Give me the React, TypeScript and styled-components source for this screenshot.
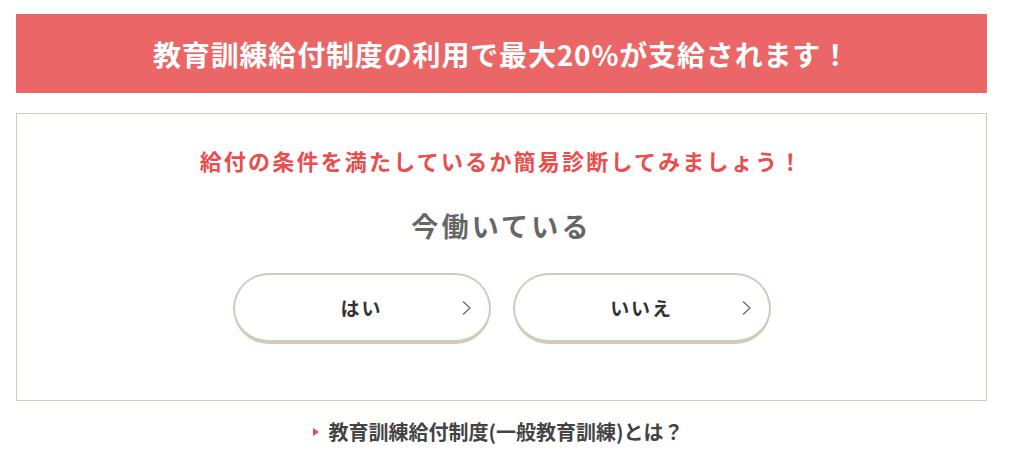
import styled, { createGlobalStyle } from 'styled-components';

const GlobalStyle = createGlobalStyle`
  body {
    margin: 0;
    background: #fff;
    font-family: "Noto Sans CJK JP", "Noto Sans", sans-serif;
  }
`;

const Page = styled.div`
  padding: 14px 30px 0 16px;
  display: flex;
  flex-direction: column;
`;

const Banner = styled.h2`
  margin: 0;
  height: 79px;
  background: #eb6767;
  color: #fff;
  font-size: 28px;
  font-weight: 700;
  letter-spacing: 0.03em;
  display: flex;
  align-items: center;
  justify-content: center;
`;

const Card = styled.section`
  margin-top: 20px;
  height: 288px;
  border: 1px solid #d3cab9;
  display: flex;
  flex-direction: column;
  align-items: center;
  box-sizing: border-box;
  padding-top: 30px;
`;

const Lead = styled.p`
  margin: 0;
  color: #e84e4e;
  font-size: 22px;
  font-weight: 700;
  letter-spacing: 0.1em;
  line-height: 32px;
`;

const Question = styled.h3`
  margin: 30px 0 0;
  color: #666;
  font-size: 27px;
  font-weight: 700;
  letter-spacing: 0.12em;
  line-height: 40px;
`;

const Answers = styled.div`
  margin-top: 27px;
  display: flex;
  gap: 22px;
`;

const AnswerButton = styled.button`
  position: relative;
  width: 258px;
  height: 71px;
  box-sizing: border-box;
  background: #fff;
  border: 2px solid #d3cab9;
  border-bottom-width: 4px;
  border-radius: 36px;
  color: #333;
  font-family: inherit;
  font-size: 19px;
  font-weight: 700;
  letter-spacing: 0.1em;
  display: flex;
  align-items: center;
  justify-content: center;
  cursor: pointer;
`;

const Chevron = styled.svg`
  position: absolute;
  right: 18px;
  top: 50%;
  transform: translateY(-50%);
`;

const MoreLink = styled.a`
  margin-top: 17px;
  align-self: center;
  display: flex;
  align-items: center;
  gap: 9px;
  color: #444;
  font-size: 20px;
  font-weight: 700;
  text-decoration: none;
  line-height: 28px;
  padding-right: 6px;
`;

const Marker = styled.span`
  width: 0;
  height: 0;
  border-top: 4px solid transparent;
  border-bottom: 4px solid transparent;
  border-left: 6px solid #e84e4e;
`;

function Arrow() {
  return (
    <Chevron width="9" height="15" viewBox="0 0 9 15">
      <polyline points="1,1 8,7.5 1,14" fill="none" stroke="#666" strokeWidth="1.2" />
    </Chevron>
  );
}

export default function App() {
  return (
    <>
      <GlobalStyle />
      <Page>
        <Banner>教育訓練給付制度の利用で最大20%が支給されます！</Banner>
        <Card>
          <Lead>給付の条件を満たしているか簡易診断してみましょう！</Lead>
          <Question>今働いている</Question>
          <Answers>
            <AnswerButton>
              はい
              <Arrow />
            </AnswerButton>
            <AnswerButton>
              いいえ
              <Arrow />
            </AnswerButton>
          </Answers>
        </Card>
        <MoreLink href="#">
          <Marker />
          教育訓練給付制度(一般教育訓練)とは？
        </MoreLink>
      </Page>
    </>
  );
}
